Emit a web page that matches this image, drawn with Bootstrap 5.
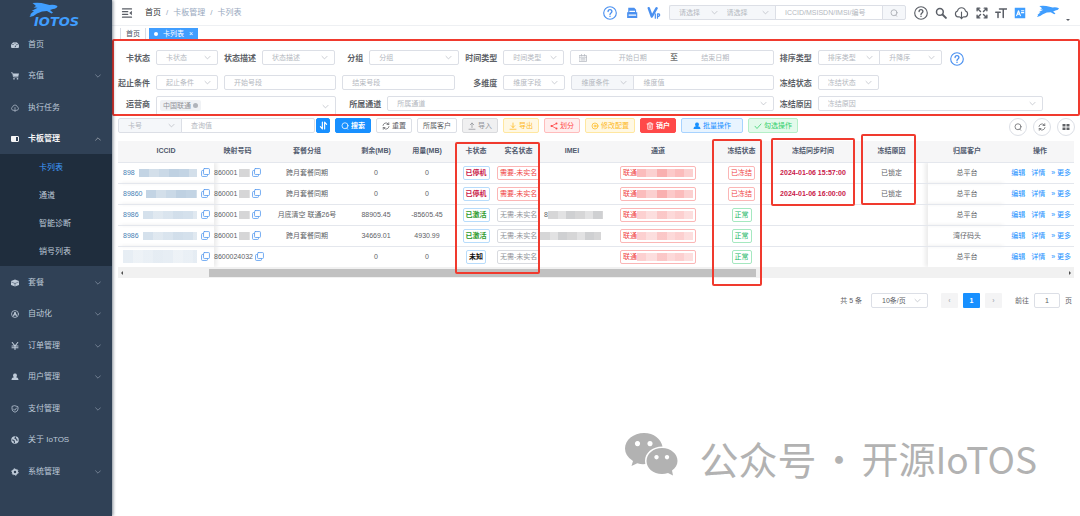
<!DOCTYPE html>
<html lang="zh-CN">
<head>
<meta charset="utf-8">
<meta name="viewport" content="width=device-width, initial-scale=1">
<title>IoTOS 卡列表</title>
<link href="https://cdn.jsdelivr.net/npm/bootstrap@5.3.0/dist/css/bootstrap.min.css" rel="stylesheet">
<style>
body{font:7px/12px "Liberation Sans","Noto Sans CJK SC",sans-serif;color:#606266;background:#fff}
a{text-decoration:none}
svg{fill:none;stroke:currentColor;stroke-width:1.5;stroke-linecap:round;stroke-linejoin:round;flex:none}
svg .solid{fill:currentColor;stroke:none}
.i8{width:8px;height:8px}.i9{width:9px;height:9px}.i12{width:12px;height:12px}.i14{width:14px;height:14px}
/* sidebar */
.side{width:112px;background:#304156;box-shadow:1px 0 3px rgba(0,21,41,.5);z-index:2;font-size:8px}
.brand{height:29px;color:#409eff;padding:2px 0 0 29px}
.brand b{font:italic bold 13px/9px "DejaVu Sans",sans-serif;padding-left:5px}
.brand svg{width:29px;height:15px}
.menu>li:nth-child(even){margin-bottom:1px}
.menu>li>a{height:31px;padding:0 11px;color:#bfcbd9;gap:9px}
.menu .chev{margin-left:auto;opacity:.5;width:6px;height:6px}
.menu>li>a.open{color:#f4f4f5;font-weight:bold}
.menu>li>.sub{background:#1f2d3d}
.sub a{height:28px;padding-left:39px;color:#bfcbd9}
.sub a.active{color:#409eff}
/* top */
.top{height:26px;border-bottom:1px solid #eef0f3;padding:0 10px 0 9px;color:#5a5e66}
.crumb{font-size:8px;gap:5px;color:#97a8be;padding-left:12px}
.crumb a{color:#303133}
.tabs{padding:2px 0 0 8px;gap:3px}
.tabs a{height:11px;line-height:11px;padding:0 5px;border:0 solid #d8dce5;color:#495060;border-width:0 1px}
.tabs a.on{background:#409eff;color:#fff;border:0;padding:0 5px;gap:5px}
.dot{width:4px;height:4px;border-radius:50%;background:#fff}
/* fields */
.form-control,.form-select{height:15px;min-height:0;min-width:0;font-size:7px;line-height:12px;padding:0 9px;border:1px solid #dcdfe6;border-radius:2px;color:#606266;box-shadow:none}
.form-select,.pick{color:#b4b8c0;background-image:url("data:image/svg+xml,%3Csvg xmlns='http://www.w3.org/2000/svg' viewBox='0 0 10 10'%3E%3Cpath d='M1 3l4 4 4-4' fill='none' stroke='%23b4b8c0'/%3E%3C/svg%3E");background-size:7px 7px;background-position:right 6px center;background-repeat:no-repeat}
.form-control::placeholder{color:#b4b8c0;opacity:1}
.grey{background-color:#f5f7fa}
.filter{border:2px solid #f03a2e;border-radius:2px;padding:9px 4px 0;height:77px;overflow:hidden}
.fr-row{display:grid;column-gap:6px;align-items:start;height:15px}
.fr-row>*{min-width:0}
.fr-row label,.fr-row .lab{font-weight:bold;font-size:8px;line-height:17px;text-align:right;white-space:nowrap;color:#5c5f66}
.r1{grid-template-columns:32px 62fr 32px 73fr 22px 90fr 32px 61fr 203fr 32px 124fr 126fr}
.r2{grid-template-columns:32px 62fr 112fr 113fr 36px 62fr 202fr 32px 61fr 189fr;margin-top:10px}
.r3{grid-template-columns:32px 180fr 39px 386fr 32px 225fr 25fr;margin-top:6px}
.range{border:1px solid #dcdfe6;border-radius:2px;height:15px;color:#b4b8c0}
.range input{border:0;height:13px;text-align:center;padding:0;background:none}
.range span{color:#303133;font-size:8px}
.multi{border:1px solid #dcdfe6;border-radius:2px;height:20px;padding:3px 3px}
.chip{background:#f0f2f5;color:#909399;height:11px;line-height:11px;padding:0 3px;border-radius:2px;gap:2px}
.chip button{width:5px;height:5px;border-radius:50%;background:#b0b4bb;border:0;padding:0}
.help{color:#4a90f0}
.hint{margin:2px}
/* toolbar */
.tools{padding:2px 5px 0 6px;gap:5px;height:25px}
.btn{height:15px;font-size:7px;line-height:13px;padding:0 5px;border-radius:2px;gap:2px;display:inline-flex;align-items:center;justify-content:center;white-space:nowrap;--bs-btn-border-color:#dcdfe6;--bs-btn-color:#606266}
.b-blue{background:#1890ff;border-color:#1890ff;color:#fff;font-weight:bold}
.b-grey{background:#f0f0f1;border-color:#d9dadd;color:#909399}
.b-gold{background:#fff8e3;border-color:#ffe7a0;color:#fdb91f}
.b-pink{background:#ffeded;border-color:#ffbcbc;color:#ff4949}
.b-red{background:#ff4949;border-color:#ff4949;color:#fff;font-weight:bold}
.b-sky{background:#e8f4ff;border-color:#a8d3ff;color:#1890ff}
.b-mint{background:#e3faeb;border-color:#b4efc8;color:#30cf69}
.wide{padding:0 11px}
.round{width:18px;height:18px;border-radius:50%;padding:0}
/* table */
.grid-wrap{margin:0 6px 0 6px}
.cards{table-layout:fixed;width:100%;border-collapse:collapse;text-align:center;color:#606266}
.cards th{height:21px;background:#f6f6f7;color:#515a6e;font-weight:bold;position:relative;white-space:nowrap;padding:0}
.cards td{height:21px;border-top:1px solid #e4e7ed;white-space:nowrap;padding:0}
.cards .fixl{box-shadow:3px 0 4px rgba(0,0,0,.08)}
.cards .fixr{box-shadow:-3px 0 4px rgba(0,0,0,.08)}
.cards .key{text-align:left;padding-left:5px}
.cards .key div{gap:4px;color:#4a7fb5}
.cards .num div{gap:2px;color:#606266}
.cards .num .mo{width:18px}
.cards svg{color:#5a9cf0}
.ring{position:absolute;left:0;right:0;border:2px solid #f03a2e;border-radius:2px;z-index:1;pointer-events:none}
.mo{height:8px;background:repeating-linear-gradient(90deg,#c3d4e4 0 10px,#d3dfea 10px 20px,#cad9e7 20px 30px,#bfd1e2 30px 40px)}
.mo.pale{opacity:.7}
.mo.faint{opacity:.4;height:13px}
.mo.ash{background:repeating-linear-gradient(90deg,#d6d6d7 0 10px,#e2e2e3 10px 18px,#cfd0d2 18px 27px)}
.mo.rose{width:56px;background:repeating-linear-gradient(90deg,#fbbcbc 0 9px,#fbd0d0 9px 20px,#f9b0b0 20px 30px,#fcc9c9 30px 38px)}
.tag{display:inline-flex;align-items:center;height:14px;padding:0 2px;border:1px solid;border-radius:2px;line-height:12px}
.t-stop{color:#c9184a;border-color:#b8dcfb;font-weight:bold}
.t-act{color:#2b9a2b;border-color:#b8dcfb;font-weight:bold}
.t-unk{color:#111;border-color:#b8dcfb;font-weight:bold}
.t-red{color:#ef4444;border-color:#fbb6b6}
.t-gry{color:#909399;border-color:#d9dbe0}
.t-grn{color:#22b866;border-color:#a5e8c0}
.sync{color:#c9184a;font-weight:bold}
.ops{gap:6px;color:#1890ff;padding-right:3px}
.ops a{color:#1890ff}
.scroller{height:11px;background:#f1f1f1;padding:2px 3px;color:#505050}
.scroller i{height:8px;background:#c1c1c1;margin:0 33% 0 9%}
.tri{width:0;height:0;border:2px solid transparent}
.tri.l{border-right-color:#505050;border-left:0}.tri.r{border-left-color:#505050;border-right:0}
/* pager */
.pager{margin:15px 8px 0 0;gap:5px;color:#606266}
.pager button{width:17px;height:15px;border:0;border-radius:1px;background:#f4f4f5;color:#b0b4bb;padding:0;font-weight:bold}
.pager button.cur{background:#1890ff;color:#fff}
.pager .form-select{width:57px;color:#606266;padding:0 10px}
.pager .form-control{width:26px;text-align:center;padding:0}
.mark-line{color:#b2b2b2;font:37px/54px "Noto Sans CJK SC",sans-serif;padding:0 43px 31px 0;gap:4px}
.mark-line svg{width:54px;height:46px}
.mark-line .acc{font-size:39px}
</style>
</head>
<body>
<svg class="d-none">
<symbol id="down" viewBox="0 0 10 10"><path d="M1 3l4 4 4-4"/></symbol>
<symbol id="up" viewBox="0 0 10 10"><path d="M1 7l4-4 4 4"/></symbol>
<symbol id="q" viewBox="0 0 16 16"><circle cx="8" cy="8" r="7.2" stroke-width="1.3"/><path d="M5.8 6.4c0-3 4.4-3 4.4 0C10.200 7.900 8 8 8 9.600M8 11.700v.2"/></symbol>
<symbol id="find" viewBox="0 0 16 16"><circle cx="8" cy="7.500" r="6"/><path d="M11 12l2.500 2.500"/></symbol>
<symbol id="cyc" viewBox="0 0 16 16"><path d="M2 7a6 6 0 0 1 10-3.500l1.500 1.500M14 9a6 6 0 0 1-10 3.500L2.500 11M13.500 1.500V5H10M2.500 14.500V11H6"/></symbol>
<symbol id="copy" viewBox="0 0 16 16"><rect x="4.500" y="1" width="10.500" height="10.500" rx="1.500"/><path d="M4 4.500H2.500Q1 4.500 1 6v7.500Q1 15 2.500 15H10q1.500 0 1.500-1.500V12"/></symbol>
<symbol id="user" viewBox="0 0 16 16"><path class="solid" d="M8 1a3.800 4 0 0 1 2 7.500c3 .8 5 2 5 5.500H1c0-3.500 2-4.700 5-5.500A3.800 4 0 0 1 8 1z"/></symbol>
<symbol id="cloud" viewBox="0 0 16 16"><path d="M5 12.500H4a3.500 3.500 0 0 1-.5-6.800 4.600 4.600 0 0 1 9 0 3.500 3.500 0 0 1-.5 6.800h-1M8 7v7.500M6 12.500l2 2 2-2" stroke-width="1.300"/></symbol>
<symbol id="gear" viewBox="0 0 16 16"><circle cx="8" cy="8" r="4.300" stroke-width="3.500"/><circle cx="8" cy="8" r="6.500" stroke-width="2" stroke-dasharray="3 3.800" stroke-linecap="butt"/></symbol>
<symbol id="run" viewBox="0 0 28 15"><path class="solid" d="M3 1Q10 0 16 2l4 1Q24 2 28 4q-.5 2.500-4.500 3l-3 1 3 2.800-1.500.7-4.500-2.500-5 .5-5 2-3.500 2.500L0 15l1.500-2.500L.5 12.500l4-3.500L2 9l6-3.200L4 5.500 6.500 4z"/></symbol>
</svg>
<div class="d-flex min-vh-100">
<aside class="side flex-shrink-0">
  <div class="brand d-flex flex-column"><svg><use href="#run"/></svg><b>IOTOS</b></div>
  <ul class="menu list-unstyled mb-0">
    <li><a href="#" class="d-flex align-items-center"><svg class="i8" viewBox="0 0 16 16"><path class="solid" fill-rule="evenodd" d="M1 14a8 8 0 1 1 14 0zM7 5h2V3H7zM3 8h2V6H3zm8 0h2V6h-2zM7 12.500h2l2-5-3 3z"/></svg>首页</a></li>
    <li><a href="#" class="d-flex align-items-center"><svg class="i8" viewBox="0 0 16 16"><path d="M0 1.500h3L5 10h9"/><path class="solid" d="M3.500 3H16l-1.500 6H5z"/><circle class="solid" cx="6" cy="13.500" r="1.700"/><circle class="solid" cx="13" cy="13.500" r="1.700"/></svg>充值<svg class="chev"><use href="#down"/></svg></a></li>
    <li><a href="#" class="d-flex align-items-center"><svg class="i8"><use href="#cloud"/></svg>执行任务</a></li>
    <li><a href="#" class="open d-flex align-items-center"><svg class="i8" viewBox="0 0 16 16"><rect x="1" y="3" width="14" height="10" rx="1" stroke-width="2"/><path class="solid" d="M1 3h9v10H1z"/></svg>卡板管理<svg class="chev"><use href="#up"/></svg></a>
      <div class="sub">
        <a href="#" class="active d-flex align-items-center">卡列表</a>
        <a href="#" class="d-flex align-items-center">通道</a>
        <a href="#" class="d-flex align-items-center">智能诊断</a>
        <a href="#" class="d-flex align-items-center">销号列表</a>
      </div></li>
    <li><a href="#" class="d-flex align-items-center"><svg class="i8" viewBox="0 0 16 16"><path class="solid" d="M8 1l8 3v8l-8 3-8-3V4z"/><path d="M1 6l7 3 7-3M8 9v5" stroke="#304156" stroke-width="1"/></svg>套餐<svg class="chev"><use href="#down"/></svg></a></li>
    <li><a href="#" class="d-flex align-items-center"><svg class="i8" viewBox="0 0 16 16"><circle cx="8" cy="8" r="7"/><path d="M5 12l3-8 3 8M6 9.500h4" stroke-width="2"/></svg>自动化<svg class="chev"><use href="#down"/></svg></a></li>
    <li><a href="#" class="d-flex align-items-center"><svg class="i8" viewBox="0 0 16 16"><path d="M2.500 1L8 8l5.500-7M8 8v7M2 8h12M2 11.500h12" stroke-width="2.200"/></svg>订单管理<svg class="chev"><use href="#down"/></svg></a></li>
    <li><a href="#" class="d-flex align-items-center"><svg class="i8"><use href="#user"/></svg>用户管理<svg class="chev"><use href="#down"/></svg></a></li>
    <li><a href="#" class="d-flex align-items-center"><svg class="i8" viewBox="0 0 16 16"><path d="M8 1.500l6 2V8q0 4.500-6 6.500Q2 12.500 2 8V3.500zM5 8l2.500 2.500L11 6"/></svg>支付管理<svg class="chev"><use href="#down"/></svg></a></li>
    <li><a href="#" class="d-flex align-items-center"><svg class="i8" viewBox="0 0 16 16"><circle class="solid" cx="8" cy="8" r="7.500"/><path d="M9 2l-1 3 3 1 1 3M3 8l3 1 1 4" stroke="#304156" stroke-width="2.200"/></svg>关于 IoTOS</a></li>
    <li><a href="#" class="d-flex align-items-center"><svg class="i8"><use href="#gear"/></svg>系统管理<svg class="chev"><use href="#down"/></svg></a></li>
  </ul>
</aside>

<main class="flex-fill d-flex flex-column" style="min-width:0">
  <header class="top d-flex align-items-center">
    <svg class="i12" viewBox="0 0 16 16"><path d="M2 2.500h12M2 6.200h7M2 9.800h7M2 13.500h12" stroke-width="1.700"/><path class="solid" d="M14.500 5v6l-3.500-3z"/></svg>
    <nav class="crumb d-flex me-auto"><a href="#">首页</a><span>/</span><span>卡板管理</span><span>/</span><span>卡列表</span></nav>
    <div class="d-flex align-items-center help me-2" style="gap:9px">
      <svg class="i14"><use href="#q"/></svg>
      <svg class="i12" viewBox="0 0 16 16"><path class="solid" fill-rule="evenodd" d="M3 1h8l2.500 2.500V7H15v7.500H1.500V7H3zM4.500 5v1.500H12V5zM3.500 10v1.500h10V10z"/></svg>
      <svg class="i14" viewBox="0 0 16 16"><path d="M2 2.500L5.500 12 11 2.500" stroke-width="2.800"/><path d="M9.500 9v5M12 14V9h1.500q2 1.400 0 2.800H12" stroke-width="1.400"/></svg>
    </div>
    <div class="input-group flex-nowrap" style="width:237px">
      <select class="form-select grey border-end-0 pe-0" aria-label="类型"><option>请选择</option></select>
      <select class="form-select grey border-start-0 px-1" aria-label="条件"><option>请选择</option></select>
      <input class="form-control" style="flex:0 0 108px" placeholder="ICCID/MSISDN/IMSI/编号" aria-label="编号">
      <button class="btn btn-outline-secondary grey" style="width:24px" aria-label="查询"><svg class="i8" color="#a0a4ab"><use href="#find"/></svg></button>
    </div>
    <div class="d-flex align-items-center ms-2" style="gap:7px">
      <svg class="i14"><use href="#q"/></svg>
      <svg class="i12" viewBox="0 0 16 16"><circle cx="6.500" cy="6.500" r="4.500" stroke-width="2"/><path d="M10 10l4.500 4.500" stroke-width="2.600"/></svg>
      <svg style="width:15px;height:14px"><use href="#cloud"/></svg>
      <svg class="i12" viewBox="0 0 16 16"><path d="M1.500 5V1.500H5M11 1.500h3.500V5M14.500 11v3.500H11M5 14.500H1.500V11M2 2l4 4M14 2l-4 4M14 14l-4-4M2 14l4-4" stroke-width="1.900"/></svg>
      <svg class="i12" viewBox="0 0 16 16"><path d="M6 2.500h9.500M11 2.500V14M1 7h6M4 7v7" stroke-width="2"/></svg>
      <svg class="i12" viewBox="0 0 16 16" color="#409eff"><path class="solid" d="M1 1h14v14H1z"/><path d="M3.500 11.500L6 5l2.500 6.500M4.500 9.500h3M10 5h3M10 7.500h3" stroke="#fff"/></svg>
      <svg style="width:22px;height:16px;color:#409eff" class="mb-1 ms-1" viewBox="0 0 28 15"><use href="#run"/></svg>
      <span class="tri mt-3" style="border-top-color:#5a5e66"></span>
    </div>
  </header>
  <nav class="tabs d-flex"><a href="#">首页</a><a href="#" class="on d-flex align-items-center"><span class="dot"></span><span>卡列表</span><span>×</span></a></nav>

  <form class="filter">
    <div class="fr-row r1">
      <label for="a1">卡状态</label><select id="a1" class="form-select"><option>卡状态</option></select>
      <label for="a2">状态描述</label><select id="a2" class="form-select"><option>状态描述</option></select>
      <label for="a3">分组</label><select id="a3" class="form-select"><option>分组</option></select>
      <label for="a4">时间类型</label><select id="a4" class="form-select"><option>时间类型</option></select>
      <div class="range d-flex align-items-center px-1"><svg class="i8 ms-1" viewBox="0 0 16 16"><path d="M1 3h14v12H1zM1 6.500h14M5 1v3M11 1v3M4 9.500h8M4 12h8"/></svg><input class="form-control ms-2" placeholder="开始日期" aria-label="开始日期"><span>至</span><input class="form-control me-3" placeholder="结束日期" aria-label="结束日期"></div>
      <label for="a5">排序类型</label><div class="input-group flex-nowrap"><select id="a5" class="form-select"><option>排序类型</option></select><select class="form-select" aria-label="升降序"><option>升降序</option></select></div>
      <svg class="i14 help hint"><use href="#q"/></svg>
    </div>
    <div class="fr-row r2">
      <label for="b1">起止条件</label><select id="b1" class="form-select"><option>起止条件</option></select>
      <input class="form-control" placeholder="开始号段" aria-label="开始号段">
      <input class="form-control" placeholder="结束号段" aria-label="结束号段">
      <label for="b2">多维度</label><select id="b2" class="form-select"><option>维度字段</option></select>
      <div class="input-group flex-nowrap"><select class="form-select grey" style="flex:0 0 63px" aria-label="维度条件"><option>维度条件</option></select><input class="form-control" placeholder="维度值" aria-label="维度值"></div>
      <label for="b3">冻结状态</label><select id="b3" class="form-select"><option>冻结状态</option></select>
    </div>
    <div class="fr-row r3">
      <span class="lab">运营商</span><div class="multi pick d-flex align-items-start"><span class="chip d-flex align-items-center">中国联通<button type="button" aria-label="移除"></button></span></div>
      <label for="c1">所属通道</label><select id="c1" class="form-select"><option>所属通道</option></select>
      <label for="c2">冻结原因</label><select id="c2" class="form-select"><option>冻结原因</option></select>
    </div>
  </form>

  <div class="tools d-flex">
    <div class="input-group flex-nowrap" style="width:197px"><select class="form-select grey" style="flex:0 0 64px" aria-label="卡号"><option>卡号</option></select><input class="form-control" placeholder="查询值" aria-label="查询值"></div>
    <button class="btn b-blue px-0" style="width:14px;margin-left:-4px" aria-label="排序"><svg class="i9" viewBox="0 0 16 16"><path d="M6 2v12L2.500 10M10 14V2l3.500 4" stroke-width="2"/></svg></button>
    <button class="btn b-blue"><svg class="i8"><use href="#find"/></svg>搜索</button>
    <button class="btn btn-outline-secondary"><svg class="i8"><use href="#cyc"/></svg>重置</button>
    <button class="btn btn-outline-secondary">所属客户</button>
    <button class="btn b-grey"><svg class="i8" viewBox="0 0 16 16"><path d="M8 11V2M4.500 5.500L8 2l3.500 3.500M2 14.500h12"/></svg>导入</button>
    <button class="btn b-gold"><svg class="i8" viewBox="0 0 16 16"><path d="M8 2v9M4.500 7.500L8 11l3.500-3.500M2 14.500h12"/></svg>导出</button>
    <button class="btn b-pink"><svg class="i8" viewBox="0 0 16 16"><path d="M13 3L3 8l10 5" /><circle class="solid" cx="13" cy="3" r="2"/><circle class="solid" cx="3" cy="8" r="2"/><circle class="solid" cx="13" cy="13" r="2"/></svg>划分</button>
    <button class="btn b-gold"><svg class="i8" viewBox="0 0 16 16"><circle cx="8" cy="8" r="6"/><circle cx="8" cy="8" r="2"/></svg>修改配置</button>
    <button class="btn b-red"><svg class="i8" viewBox="0 0 16 16"><path d="M2 4h12M5.500 4V1.500h5V4M3.500 4v10.500h9V4M6.500 7v5M9.500 7v5"/></svg>销户</button>
    <button class="btn b-sky wide"><svg class="i8"><use href="#user"/></svg>批量操作</button>
    <button class="btn b-mint"><svg class="i8" viewBox="0 0 16 16"><path d="M2 8.500L6 13l8-9"/></svg>勾选操作</button>
    <div class="ms-auto d-flex" style="gap:6px">
      <button class="btn btn-outline-secondary round" aria-label="搜索栏"><svg class="i8"><use href="#find"/></svg></button>
      <button class="btn btn-outline-secondary round" aria-label="刷新"><svg class="i8"><use href="#cyc"/></svg></button>
      <button class="btn btn-outline-secondary round" aria-label="显示列"><svg class="i8" viewBox="0 0 16 16"><path class="solid" d="M1 2h6v5H1zM9 2h6v5H9zM1 9h6v5H1zM9 9h6v5H9z"/></svg></button>
    </div>
  </div>

  <div class="grid-wrap">
  <table class="cards">
    <colgroup><col style="width:96px"><col style="width:47px"><col style="width:92px"><col style="width:46px"><col style="width:56px"><col style="width:42px"><col style="width:43px"><col style="width:64px"><col style="width:108px"><col style="width:59px"><col style="width:84px"><col style="width:73px"><col style="width:78px"><col style="width:68px"></colgroup>
    <thead><tr><th class="fixl">ICCID</th><th>映射号码</th><th>套餐分组</th><th>剩余(MB)</th><th>用量(MB)</th>
      <th>卡状态<span class="ring" style="top:1px;height:132px;right:-43px"></span></th><th>实名状态</th><th>IMEI</th><th>通道</th>
      <th>冻结状态<span class="ring" style="top:-2px;height:147px;right:9px"></span></th>
      <th>冻结同步时间<span class="ring" style="top:-3px;height:68px"></span></th>
      <th>冻结原因<span class="ring" style="top:-7px;height:71px;left:6px;right:12px"></span></th><th class="fixr">归属客户</th><th>操作</th></tr></thead>
    <tbody>
    <tr><td class="key fixl"><div class="d-flex align-items-center">898<span class="mo flex-fill"></span><svg class="i9 me-1"><use href="#copy"/></svg></div></td>
      <td class="num"><div class="d-flex align-items-center">860001<span class="mo ash"></span><svg class="i9"><use href="#copy"/></svg></div></td>
      <td>跨月套餐同期</td><td>0</td><td>0</td><td><span class="tag t-stop">已停机</span></td><td><span class="tag t-red">需要-未实名</span></td><td></td>
      <td><span class="tag t-red">联通<span class="mo rose"></span></span></td><td><span class="tag t-red">已冻结</span></td><td class="sync">2024-01-06 15:57:00</td><td>已锁定</td><td class="fixr">总平台</td>
      <td><div class="ops d-flex justify-content-end"><a href="#">编辑</a><a href="#">详情</a><a href="#">» 更多</a></div></td></tr>
    <tr><td class="key fixl"><div class="d-flex align-items-center">89860<span class="mo flex-fill"></span><svg class="i9 me-1"><use href="#copy"/></svg></div></td>
      <td class="num"><div class="d-flex align-items-center">860001<span class="mo ash"></span><svg class="i9"><use href="#copy"/></svg></div></td>
      <td>跨月套餐同期</td><td>0</td><td>0</td><td><span class="tag t-stop">已停机</span></td><td><span class="tag t-red">需要-未实名</span></td><td></td>
      <td><span class="tag t-red">联通<span class="mo rose"></span></span></td><td><span class="tag t-red">已冻结</span></td><td class="sync">2024-01-06 16:00:00</td><td>已锁定</td><td class="fixr">总平台</td>
      <td><div class="ops d-flex justify-content-end"><a href="#">编辑</a><a href="#">详情</a><a href="#">» 更多</a></div></td></tr>
    <tr><td class="key fixl"><div class="d-flex align-items-center">8986<span class="mo pale flex-fill"></span><svg class="i9 me-1"><use href="#copy"/></svg></div></td>
      <td class="num"><div class="d-flex align-items-center">860001<span class="mo ash"></span><svg class="i9"><use href="#copy"/></svg></div></td>
      <td>月底清空 联通26号</td><td>88905.45</td><td>-85605.45</td><td><span class="tag t-act">已激活</span></td><td><span class="tag t-gry">无需-未实名</span></td><td><div class="d-flex align-items-center ps-1">8<span class="mo ash" style="width:55px"></span></div></td>
      <td><span class="tag t-red">联通<span class="mo rose pale"></span></span></td><td><span class="tag t-grn">正常</span></td><td></td><td></td><td class="fixr">总平台</td>
      <td><div class="ops d-flex justify-content-end"><a href="#">编辑</a><a href="#">详情</a><a href="#">» 更多</a></div></td></tr>
    <tr><td class="key fixl"><div class="d-flex align-items-center">8986<span class="mo pale flex-fill"></span><svg class="i9 me-1"><use href="#copy"/></svg></div></td>
      <td class="num"><div class="d-flex align-items-center">860001<span class="mo ash"></span><svg class="i9"><use href="#copy"/></svg></div></td>
      <td>跨月套餐同期</td><td>34669.01</td><td>4930.99</td><td><span class="tag t-act">已激活</span></td><td><span class="tag t-gry">无需-未实名</span></td><td><div class="d-flex"><span class="mo ash" style="width:61px"></span></div></td>
      <td><span class="tag t-red">联通<span class="mo rose pale"></span></span></td><td><span class="tag t-grn">正常</span></td><td></td><td></td><td class="fixr">湾仔码头</td>
      <td><div class="ops d-flex justify-content-end"><a href="#">编辑</a><a href="#">详情</a><a href="#">» 更多</a></div></td></tr>
    <tr><td class="key fixl"><div class="d-flex align-items-center"><span class="mo faint flex-fill"></span><svg class="i9 me-1"><use href="#copy"/></svg></div></td>
      <td class="num"><div class="d-flex align-items-center">8600024032<svg class="i9"><use href="#copy"/></svg></div></td>
      <td></td><td>0</td><td>0</td><td><span class="tag t-unk">未知</span></td><td><span class="tag t-gry">无需-未实名</span></td><td></td>
      <td><span class="tag t-red">联通<span class="mo rose pale"></span></span></td><td><span class="tag t-grn">正常</span></td><td></td><td></td><td class="fixr">总平台</td>
      <td><div class="ops d-flex justify-content-end"><a href="#">编辑</a><a href="#">详情</a><a href="#">» 更多</a></div></td></tr>
    </tbody>
  </table>
  <div class="scroller d-flex align-items-center"><span class="tri l"></span><i class="flex-fill"></i><span class="tri r"></span></div>
  </div>

  <div class="pager d-flex align-items-center justify-content-end">
    <span class="me-1">共 5 条</span>
    <select class="form-select me-1" aria-label="每页条数"><option>10条/页</option></select>
    <button class="ms-1" aria-label="上一页">‹</button><button class="cur">1</button><button class="me-2" aria-label="下一页">›</button>
    <label for="pg">前往</label><input id="pg" class="form-control" value="1"><span>页</span>
  </div>

  <div class="mark-line mt-auto d-flex align-items-center justify-content-end">
    <svg class="me-3 mb-2" viewBox="0 0 54 46"><path class="solid" fill-rule="evenodd" d="M19 2c10 0 17 6 18.500 13.500C27 15.500 20 22 20 30l.3 3q-4 .5-8-.8L6.500 35l1.500-5Q0 25 0 17.500C0 9 8.500 2 19 2zm-6.500 8a2.600 2.600 0 1 0 .01 0zm12.500 0a2.600 2.600 0 1 0 .01 0z"/><path class="solid" fill-rule="evenodd" d="M37 17c9 0 15.500 6 15.500 13 0 4-2 7-5.500 9.500l1 5-5-2.500q-3 1-6 1c-9 0-15.500-6-15.500-13S28 17 37 17zm-5.500 7a2.200 2.200 0 1 0 .01 0zm10.500 0a2.200 2.200 0 1 0 .01 0z"/></svg>
    <span class="acc">公众号</span><span>·</span><span>开源IoTOS</span>
  </div>
</main>
</div>
<script src="https://cdn.jsdelivr.net/npm/bootstrap@5.3.0/dist/js/bootstrap.bundle.min.js"></script>
</body>
</html>
